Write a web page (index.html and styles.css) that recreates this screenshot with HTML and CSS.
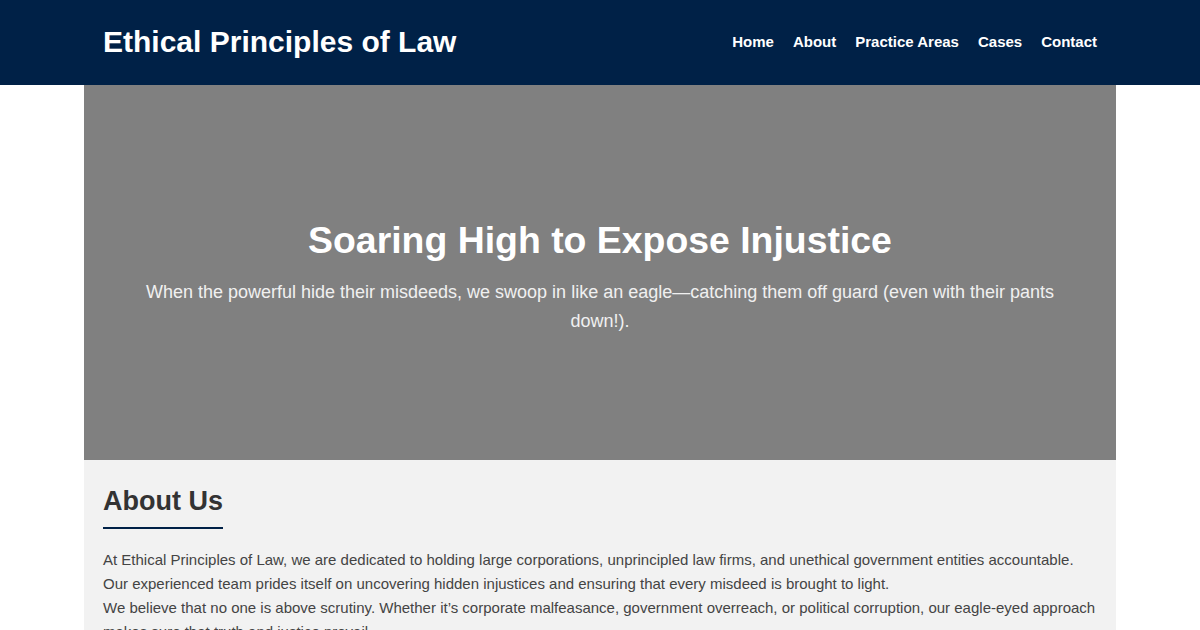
FILE: index.html
```html
<!DOCTYPE html>
<html lang="en">
<head>
<meta charset="utf-8">
<title>Ethical Principles of Law</title>
<link rel="stylesheet" href="styles.css">
</head>
<body>
<header class="site-header">
  <div class="header-inner">
    <div class="logo">Ethical Principles of Law</div>
    <nav class="nav">
      <a href="#">Home</a>
      <a href="#">About</a>
      <a href="#">Practice Areas</a>
      <a href="#">Cases</a>
      <a href="#">Contact</a>
    </nav>
  </div>
</header>
<main class="container">
  <section class="hero">
    <h1 class="hero-title">Soaring High to Expose Injustice</h1>
    <p class="hero-sub">When the powerful hide their misdeeds, we swoop in like an eagle—catching them off guard (even with their pants down!).</p>
  </section>
  <section class="about">
    <h2 class="section-title">About Us</h2>
    <p class="text">At Ethical Principles of Law, we are dedicated to holding large corporations, unprincipled law firms, and unethical government entities accountable. Our experienced team prides itself on uncovering hidden injustices and ensuring that every misdeed is brought to light.</p>
    <p class="text">We believe that no one is above scrutiny. Whether it’s corporate malfeasance, government overreach, or political corruption, our eagle-eyed approach makes sure that truth and justice prevail.</p>
  </section>
</main>
</body>
</html>
```
FILE: styles.css
```css
* { box-sizing: border-box; }
html, body { margin: 0; padding: 0; }
body {
  font-family: "Liberation Sans", Arial, sans-serif;
  background: #ffffff;
  color: #333;
}
.site-header {
  background: #002147;
  height: 85px;
}
.header-inner {
  width: 1032px;
  margin: 0 auto;
  height: 100%;
  padding: 0 19px 2px;
  display: flex;
  align-items: center;
  justify-content: space-between;
}
.logo {
  color: #fff;
  font-weight: bold;
  font-size: 30px;
}
.nav {
  display: flex;
  gap: 19px;
}
.nav a {
  color: #fff;
  text-decoration: none;
  font-weight: bold;
  font-size: 15px;
}
.container {
  width: 1032px;
  margin: 0 auto;
}
.hero {
  background: #808080;
  height: 375px;
  display: flex;
  flex-direction: column;
  align-items: center;
  justify-content: center;
  text-align: center;
  padding: 10px 60px 0;
  color: #fff;
}
.hero-title {
  margin: 0 0 16px;
  font-size: 37.4px;
  font-weight: bold;
}
.hero-sub {
  margin: 0;
  font-size: 18px;
  line-height: 29px;
  color: #f0f0f0;
}
.about {
  background: #f2f2f2;
  padding: 26px 19px 20px;
}
.section-title {
  display: inline-block;
  margin: 0 0 19px;
  font-size: 27px;
  color: #333;
  padding-bottom: 10px;
  border-bottom: 2px solid #002147;
}
.text {
  margin: 0;
  font-size: 15px;
  line-height: 24px;
  color: #444;
}
```
